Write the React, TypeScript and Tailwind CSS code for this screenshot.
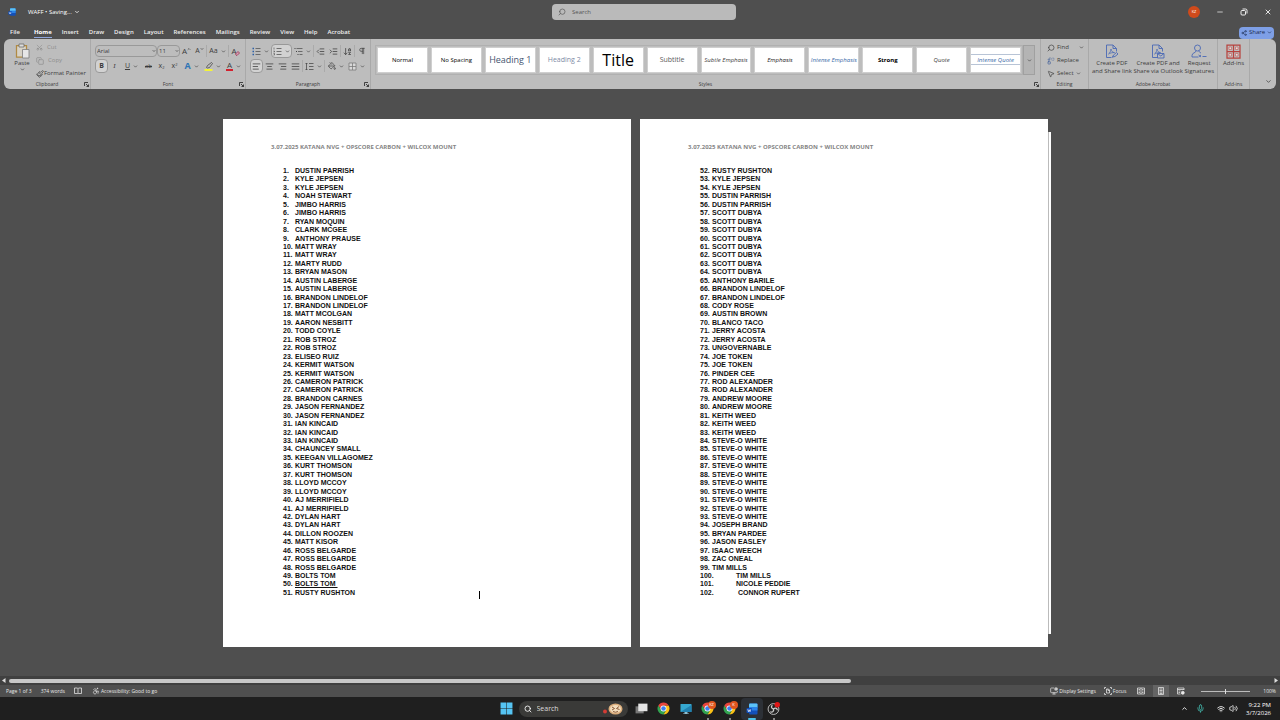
import type { ReactNode } from 'react';
import {
  Accessibility,
  AlignCenter,
  AlignJustify,
  AlignLeft,
  AlignRight,
  ArrowDownAZ,
  ChevronDown,
  ChevronUp,
  Copy,
  IndentDecrease,
  IndentIncrease,
  Mic,
  Minus,
  MonitorCog,
  MousePointer2,
  PaintBucket,
  Paintbrush,
  Pilcrow,
  Replace,
  Scissors,
  Search,
  Share2,
  Volume2,
  Wifi,
  X,
} from 'lucide-react';

const tabs = [
  'Home', 'Insert', 'Draw', 'Design', 'Layout', 'References',
  'Mailings', 'Review', 'View', 'Help', 'Acrobat',
];

const styleCards = [
  { name: 'Normal', look: 'text-[6px] text-black' },
  { name: 'No Spacing', look: 'text-[6px] text-black' },
  { name: 'Heading 1', look: 'text-[9px] text-[#44546f]' },
  { name: 'Heading 2', look: 'text-[7px] text-[#7d8aa5]' },
  { name: 'Title', look: 'text-[16px] text-black' },
  { name: 'Subtitle', look: 'text-[7px] text-[#5a5a5a]' },
  { name: 'Subtle Emphasis', look: 'text-[6px] italic text-[#404040]' },
  { name: 'Emphasis', look: 'text-[6px] italic text-[#222]' },
  { name: 'Intense Emphasis', look: 'text-[6px] italic text-[#3a6aa8]' },
  { name: 'Strong', look: 'text-[6px] font-bold text-black' },
  { name: 'Quote', look: 'text-[6px] italic text-[#404040]' },
  { name: 'Intense Quote', look: 'text-[6px] italic text-[#3a6aa8]' },
];

const firstPage = [
  'DUSTIN PARRISH', 'KYLE JEPSEN', 'KYLE JEPSEN', 'NOAH STEWART', 'JIMBO HARRIS',
  'JIMBO HARRIS', 'RYAN MOQUIN', 'CLARK MCGEE', 'ANTHONY PRAUSE', 'MATT WRAY',
  'MATT WRAY', 'MARTY RUDD', 'BRYAN MASON', 'AUSTIN LABERGE', 'AUSTIN LABERGE',
  'BRANDON LINDELOF', 'BRANDON LINDELOF', 'MATT MCOLGAN', 'AARON NESBITT', 'TODD COYLE',
  'ROB STROZ', 'ROB STROZ', 'ELISEO RUIZ', 'KERMIT WATSON', 'KERMIT WATSON',
  'CAMERON PATRICK', 'CAMERON PATRICK', 'BRANDON CARNES', 'JASON FERNANDEZ', 'JASON FERNANDEZ',
  'IAN KINCAID', 'IAN KINCAID', 'IAN KINCAID', 'CHAUNCEY SMALL', 'KEEGAN VILLAGOMEZ',
  'KURT THOMSON', 'KURT THOMSON', 'LLOYD MCCOY', 'LLOYD MCCOY', 'AJ MERRIFIELD',
  'AJ MERRIFIELD', 'DYLAN HART', 'DYLAN HART', 'DILLON ROOZEN', 'MATT KISOR',
  'ROSS BELGARDE', 'ROSS BELGARDE', 'ROSS BELGARDE', 'BOLTS TOM', 'BOLTS TOM ',
  'RUSTY RUSHTON',
];

const secondPage = [
  'RUSTY RUSHTON', 'KYLE JEPSEN', 'KYLE JEPSEN', 'DUSTIN PARRISH', 'DUSTIN PARRISH',
  'SCOTT DUBYA', 'SCOTT DUBYA', 'SCOTT DUBYA', 'SCOTT DUBYA', 'SCOTT DUBYA',
  'SCOTT DUBYA', 'SCOTT DUBYA', 'SCOTT DUBYA', 'ANTHONY BARILE', 'BRANDON LINDELOF',
  'BRANDON LINDELOF', 'CODY ROSE', 'AUSTIN BROWN', 'BLANCO TACO', 'JERRY ACOSTA',
  'JERRY ACOSTA', 'UNGOVERNABLE', 'JOE TOKEN', 'JOE TOKEN', 'PINDER CEE',
  'ROD ALEXANDER', 'ROD ALEXANDER', 'ANDREW MOORE', 'ANDREW MOORE', 'KEITH WEED',
  'KEITH WEED', 'KEITH WEED', 'STEVE-O WHITE', 'STEVE-O WHITE', 'STEVE-O WHITE',
  'STEVE-O WHITE', 'STEVE-O WHITE', 'STEVE-O WHITE', 'STEVE-O WHITE', 'STEVE-O WHITE',
  'STEVE-O WHITE', 'STEVE-O WHITE', 'JOSEPH BRAND', 'BRYAN PARDEE', 'JASON EASLEY',
  'ISAAC WEECH', 'ZAC ONEAL', 'TIM MILLS', 'TIM MILLS', 'NICOLE PEDDIE',
  ' CONNOR RUPERT',
];

function Tool({ label, active, wide, children }: { label: string; active?: boolean; wide?: boolean; children: ReactNode }) {
  return (
    <button
      aria-label={label}
      className={`flex h-[14px] shrink-0 items-center justify-center gap-[3px] rounded-sm ${wide ? 'w-[21px]' : 'w-[13px]'} ${
        active ? 'border border-[#999] bg-[#d2d2d2]' : ''
      }`}
    >
      {children}
    </button>
  );
}

function Caret() {
  return <ChevronDown className="size-[5px] shrink-0" strokeWidth={3} />;
}

function Divider() {
  return <span className="h-3 w-px shrink-0 bg-[#aaa]" />;
}

function Launcher() {
  return (
    <svg viewBox="0 0 10 10" className="size-[5px]" fill="none" stroke="#222" strokeWidth="1.6">
      <path d="M1 8V1h7M4 4l5 5M9 5v4H5" />
    </svg>
  );
}

function Group({ title, width, launcher, children }: { title: string; width: string; launcher?: boolean; children: ReactNode }) {
  return (
    <section aria-label={title} className={`flex flex-col border-r border-[#a9a9a9] ${width}`}>
      <div className="flex-1">{children}</div>
      <div className="grid h-[9px] grid-cols-[1fr_auto_1fr] items-center text-[5px] leading-[9px] text-[#3c3c3c]">
        <span />
        <span>{title}</span>
        {launcher && (
          <button aria-label={`${title} settings`} className="mr-px justify-self-end">
            <Launcher />
          </button>
        )}
      </div>
    </section>
  );
}

function Bullets({ numbered, nested }: { numbered?: boolean; nested?: boolean }) {
  return (
    <svg viewBox="0 0 18 18" className="size-[9px]" fill="none" stroke="#555" strokeWidth="1.6">
      <path d={nested ? 'M5 3h12M8 9h9M11 15h6' : 'M7 3h10M7 9h10M7 15h10'} />
      {nested ? (
        <path d="M1 3h2M4 9h2M7 15h2" stroke="#444" strokeWidth="2" />
      ) : numbered ? (
        <path d="M2 1v4M1 8h2v2H1M1 13h2v3H1" stroke="#444" strokeWidth="1.2" />
      ) : (
        <path d="M1 3h3M1 9h3M1 15h3" stroke="#2b5fa8" strokeWidth="3" />
      )}
    </svg>
  );
}

function WordLogo({ className }: { className: string }) {
  return (
    <svg viewBox="0 0 24 24" className={className}>
      <rect x="6" y="1" width="17" height="22" rx="2" fill="#1450b8" />
      <path d="M6 3a2 2 0 0 1 2-2h13a2 2 0 0 1 2 2v6H6z" fill="#5cc3f7" />
      <path d="M6 8h17v7H6z" fill="#2a83e8" />
      <rect x="1" y="10" width="11" height="10" rx="2" fill="#0f4fbc" />
      <path d="M3.500 12.500l1.500 5 1.500-4 1.500 4 1.500-5" fill="none" stroke="#fff" strokeWidth="1.300" />
    </svg>
  );
}

function ChromeLogo() {
  return (
    <svg viewBox="0 0 24 24" className="size-[13px]">
      <path d="M12 6.500h9.530A11 11 0 0 1 12 23l4.770-8.250z" fill="#fbc116" />
      <path d="M12 6.500h9.530A11 11 0 0 0 2.470 6.500l4.770 8.250z" fill="#e8453c" />
      <path d="M2.470 6.500l4.770 8.250L16.770 14.750 12 23A11 11 0 0 1 2.470 6.500z" fill="#32a350" />
      <circle cx="12" cy="12" r="5.500" fill="#fff" />
      <circle cx="12" cy="12" r="4.200" fill="#3d7ff0" />
    </svg>
  );
}

function PdfIcon({ mail }: { mail?: boolean }) {
  return (
    <svg viewBox="0 0 28 30" className="h-[15px] w-[14px]" fill="none" stroke="#4a69b5" strokeWidth="1.800">
      <path d="M12 27H3V2h13l7 7v6M16 2v7h7" />
      <path d="M7 20c3-2 5-7 5-10 0 4 3 7 7 7-4 0-9 1-12 3z" strokeWidth="1.500" />
      {mail ? (
        <path d="M13 19h13v9H13zM13 19l6.500 5 6.500-5" />
      ) : (
        <path d="M15 26l2-4 6-5 3 3-6 5zM13 28l3-3" />
      )}
    </svg>
  );
}

function SignatureIcon() {
  return (
    <svg viewBox="0 0 32 30" className="h-[15px] w-4" fill="none" stroke="#4a69b5" strokeWidth="1.800">
      <circle cx="13" cy="8" r="6" />
      <path d="M10 14c0 4-8 3-8 9v3h12M16 14c0 2 2 3 4 4M15 22l5 4M20 22l-5 4M23 25h8" />
    </svg>
  );
}

function Ribbon() {
  return (
    <div className="mx-1 flex h-[50px] rounded-md bg-[#bdbdbd] text-[#3c3c3c]">
      <Group title="Clipboard" width="w-[87px]" launcher>
        <div className="flex gap-1 pl-2 pt-[2px]">
          <button className="flex w-5 flex-col items-center pt-[2px] text-[6px] leading-[8px]">
            <svg viewBox="0 0 30 32" className="h-4 w-[15px]">
              <path d="M3 5h20v23H3z" fill="#d7d2c6" stroke="#b08a43" strokeWidth="2.500" />
              <path d="M8 2h10v6H8z" fill="#ddd" stroke="#666" strokeWidth="1.500" />
              <path d="M15 13h13v17H15z" fill="#e6e6e6" stroke="#777" strokeWidth="1.500" />
            </svg>
            Paste
            <Caret />
          </button>
          <div className="flex flex-col text-[6px] leading-[13px]">
            <button className="flex h-[13px] items-center gap-1 text-[#8d8d8d]">
              <Scissors className="size-[7px] -rotate-90" />
              Cut
            </button>
            <button className="flex h-[13px] items-center gap-1 text-[#8d8d8d]">
              <Copy className="size-2" />
              Copy
            </button>
            <button className="flex h-[13px] items-center whitespace-nowrap">
              <Paintbrush className="size-2" />
              Format Painter
            </button>
          </div>
        </div>
      </Group>

      <Group title="Font" width="w-[155px]" launcher>
        <div className="mt-[5px] flex h-[14px] items-center pl-1">
          <label className="relative flex">
            <select aria-label="Font name" className="h-3 w-[62px] appearance-none rounded-sm border border-[#999] bg-transparent pl-px text-[6px] leading-[10px]">
              <option>Arial</option>
            </select>
            <ChevronDown className="pointer-events-none absolute right-px top-[4px] size-[4px]" strokeWidth={4} />
          </label>
          <label className="relative flex">
            <select aria-label="Font size" className="h-3 w-[23px] appearance-none rounded-sm border border-[#999] bg-transparent pl-px text-[6px] leading-[10px]">
              <option>11</option>
            </select>
            <ChevronDown className="pointer-events-none absolute right-px top-[4px] size-[4px]" strokeWidth={4} />
          </label>
          <Tool label="Increase font size"><span className="text-[8px]">A</span><ChevronUp className="-ml-[3px] mb-1 size-[4px]" strokeWidth={4} /></Tool>
          <Tool label="Decrease font size"><span className="text-[7px]">A</span><ChevronDown className="-ml-[3px] mb-1 size-[4px]" strokeWidth={4} /></Tool>
          <Divider />
          <Tool label="Change case" wide><span className="text-[7px]">Aa</span><Caret /></Tool>
          <Divider />
          <Tool label="Clear formatting">
            <span className="text-[8px]">A</span>
            <svg viewBox="0 0 10 10" className="-ml-[5px] mt-1 size-[5px]" fill="#d9a0b4" stroke="#96284f" strokeWidth="1.500">
              <path d="M1 6l5-5 3 3-5 5H3z" />
            </svg>
          </Tool>
        </div>
        <div className="mt-px flex h-[14px] items-center pl-1 text-[7px]">
          <Tool label="Bold" active><b>B</b></Tool>
          <Tool label="Italic"><i className="font-serif">I</i></Tool>
          <Tool label="Underline" wide><u>U</u><Caret /></Tool>
          <Tool label="Strikethrough"><s className="text-[6px]">ab</s></Tool>
          <Tool label="Subscript"><span>x<sub className="text-[4px]">2</sub></span></Tool>
          <Tool label="Superscript"><span>x<sup className="text-[4px]">2</sup></span></Tool>
          <Tool label="Text effects" wide><span className="text-[9px] font-bold text-[#2f74b5]">A</span><Caret /></Tool>
          <Tool label="Highlight color" wide>
            <svg viewBox="0 0 18 18" className="size-[9px]" fill="none" stroke="#444" strokeWidth="1.500">
              <path d="M5 11l2-4 8-6 2 2-6 8-4 1z" />
              <path d="M1 16h16" stroke="#f4f436" strokeWidth="4" />
            </svg>
            <Caret />
          </Tool>
          <Tool label="Font color" wide><span className="h-[10px] border-b-2 border-[#d4202e] px-px text-[8px] leading-[8px]">A</span><Caret /></Tool>
        </div>
      </Group>

      <Group title="Paragraph" width="w-[125px]" launcher>
        <div className="mt-[5px] flex h-[14px] items-center pl-1">
          <Tool label="Bullets" wide><Bullets /><Caret /></Tool>
          <Tool label="Numbering" wide active><Bullets numbered /><Caret /></Tool>
          <Tool label="Multilevel list" wide><Bullets nested /><Caret /></Tool>
          <Divider />
          <Tool label="Decrease indent"><IndentDecrease className="size-[9px]" /></Tool>
          <Tool label="Increase indent"><IndentIncrease className="size-[9px]" /></Tool>
          <Divider />
          <Tool label="Sort"><ArrowDownAZ className="size-[9px]" /></Tool>
          <Divider />
          <Tool label="Show marks"><Pilcrow className="size-2" /></Tool>
        </div>
        <div className="mt-px flex h-[14px] items-center pl-1">
          <Tool label="Align left" active><AlignLeft className="size-[9px]" /></Tool>
          <Tool label="Center"><AlignCenter className="size-[9px]" /></Tool>
          <Tool label="Align right"><AlignRight className="size-[9px]" /></Tool>
          <Tool label="Justify"><AlignJustify className="size-[9px]" /></Tool>
          <Divider />
          <Tool label="Line spacing" wide>
            <svg viewBox="0 0 18 18" className="size-[9px]" fill="none" stroke="#444" strokeWidth="1.500">
              <path d="M3 2v14M1 4l2-2 2 2M1 14l2 2 2-2M8 3h9M8 9h9M8 15h9" />
            </svg>
            <Caret />
          </Tool>
          <Divider />
          <Tool label="Shading" wide><PaintBucket className="size-2" /><Caret /></Tool>
          <Tool label="Borders" wide>
            <svg viewBox="0 0 18 18" className="size-[9px]" fill="#d8d8d8" stroke="#777" strokeWidth="1.500">
              <path d="M2 2h14v14H2zM9 2v14M2 9h14" />
            </svg>
            <Caret />
          </Tool>
        </div>
      </Group>

      <Group title="Styles" width="min-w-0 flex-1" launcher>
        <div className="flex items-stretch pl-1 pr-[5px] pt-[6px]">
          <div className="flex min-w-0 flex-1 gap-[3px] border border-[#b0b0b0] p-px">
            {styleCards.map((card) => (
              <button
                key={card.name}
                className="relative flex h-[26px] min-w-0 flex-1 items-center justify-center overflow-hidden whitespace-nowrap border border-[#cfcfcf] bg-white"
              >
                {card.name === 'Intense Quote' && <span className="absolute inset-x-0 top-[6px] h-[11px] border-y border-[#b8c4d6]" />}
                <span className={card.look}>{card.name}</span>
              </button>
            ))}
          </div>
          <button aria-label="More styles" className="flex w-3 items-center justify-center border border-[#a0a0a0] bg-[#b4b4b4]">
            <Caret />
          </button>
        </div>
      </Group>

      <Group title="Editing" width="w-[48px]">
        <div className="flex flex-col pl-[6px] pt-[2px] text-[6px]">
          <button className="flex h-[13px] items-center gap-[2px]"><Search className="size-2 -scale-x-100" />Find<span className="pl-2"><Caret /></span></button>
          <button className="flex h-[13px] items-center gap-[2px]"><Replace className="size-2 text-[#44609a]" />Replace</button>
          <button className="flex h-[13px] items-center gap-[2px]"><MousePointer2 className="size-2" />Select<Caret /></button>
        </div>
      </Group>

      <Group title="Adobe Acrobat" width="w-[129px]">
        <div className="flex justify-between px-[3px] pt-[5px] text-[6px] leading-[8px]">
          <button className="flex flex-col items-center whitespace-nowrap"><PdfIcon /><span>Create PDF<br />and Share link</span></button>
          <button className="flex flex-col items-center whitespace-nowrap"><PdfIcon mail /><span>Create PDF and<br />Share via Outlook</span></button>
          <button className="flex flex-col items-center whitespace-nowrap"><SignatureIcon /><span>Request<br />Signatures</span></button>
        </div>
      </Group>

      <Group title="Add-ins" width="w-[32px]">
        <button className="flex w-full flex-col items-center pt-[5px] text-[6px] leading-[8px]">
          <svg viewBox="0 0 30 30" className="size-[15px]" fill="none" stroke="#b8433f" strokeWidth="2.500">
            <path d="M2 2h26v26H2zM15 2v26M2 15h26" />
            <path d="M6 6h5v5H6zM19 6h5v5h-5zM6 19h5v5H6zM19 19h5v5h-5z" fill="#f0dada" strokeWidth="1" />
          </svg>
          Add-ins
        </button>
      </Group>

      <button aria-label="Collapse ribbon" className="flex w-[26px] items-end justify-end p-1">
        <ChevronDown className="size-[7px]" strokeWidth={2.5} />
      </button>
    </div>
  );
}

function Page({ names, start, caret }: { names: string[]; start: number; caret?: boolean }) {
  return (
    <article className="relative w-[408px] bg-white pb-[50px] pt-6">
      <header className="pl-12 text-[6px] font-bold leading-[9px] text-[#858585]">
        3.07.2025 KATANA NVG + OPSCORE CARBON + WILCOX MOUNT
      </header>
      <ol className="mt-[15px] flex h-[430px] flex-col justify-between pl-[60px] font-['Liberation_Sans',Arial,sans-serif] text-[7px] font-bold leading-[8px] text-[#111]">
        {names.map((name, i) => {
          const n = start + i;
          return (
            <li key={n} className="flex whitespace-pre">
              <span className={n > 99 ? 'w-9' : 'w-3'}>{n}.</span>
              <span className={n === 50 ? 'underline' : ''}>{name}</span>
            </li>
          );
        })}
      </ol>
      {caret && <span className="absolute left-64 top-[472px] h-2 w-px bg-black" />}
    </article>
  );
}

function Taskbar() {
  return (
    <footer className="grid h-[23px] grid-cols-[1fr_auto_1fr] items-center bg-[#1f1f1f] text-white">
      <span />
      <nav className="flex items-center pl-1">
        <button aria-label="Start" className="mr-[6px]">
          <svg viewBox="0 0 24 24" className="size-[13px]" fill="#55c3f2">
            <path d="M1 1h10.500v10.500H1zM12.500 1H23v10.500H12.500zM1 12.500h10.500V23H1zM12.500 12.500H23V23H12.500z" />
          </svg>
        </button>
        <label className="mr-[3px] flex h-4 w-[109px] items-center gap-1 rounded-full bg-[#3a3a38] px-[5px]">
          <Search className="size-2 shrink-0" strokeWidth={2.5} />
          <input aria-label="Search Windows" placeholder="Search" className="min-w-0 flex-1 bg-transparent pl-px text-[7px] leading-3 outline-none placeholder:text-[#ddd]" />
          <svg viewBox="0 0 40 24" className="h-3 w-5 shrink-0">
            <circle cx="4" cy="17" r="4" fill="#d23c35" />
            <ellipse cx="25" cy="12" rx="14" ry="11" fill="#dcae7c" />
            <ellipse cx="25" cy="12" rx="11" ry="8" fill="#f2dcbc" />
            <path d="M18 8l5 3-5 3M32 7l-5 4 6 2M20 17q5 3 10 0" fill="none" stroke="#8a5a38" strokeWidth="2" />
          </svg>
        </label>
        <button aria-label="Task view" className="flex h-[22px] w-[22px] items-center justify-center">
          <svg viewBox="0 0 24 24" className="size-[13px]">
            <rect x="1" y="8" width="15" height="13" fill="#777" />
            <rect x="6" y="3" width="17" height="14" fill="#e4e4e4" />
          </svg>
        </button>
        <button aria-label="Chrome" className="flex h-[22px] w-[22px] items-center justify-center"><ChromeLogo /></button>
        <button aria-label="Desktop" className="flex h-[22px] w-[22px] items-center justify-center">
          <svg viewBox="0 0 24 24" className="size-3">
            <rect x="1" y="2" width="22" height="16" rx="1" fill="#35a7cf" />
            <path d="M1 18L23 4v13a1 1 0 0 1-1 1z" fill="#2181b0" />
            <path d="M9 18h6v3h3v1H6v-1h3z" fill="#8cbfd2" />
          </svg>
        </button>
        {['KZ', 'K'].map((who) => (
          <button key={who} aria-label={`Chrome profile ${who}`} className="relative flex h-[22px] w-[22px] items-center justify-center">
            <ChromeLogo />
            <span className="absolute right-[3px] top-[3px] flex size-2 items-center justify-center rounded-full bg-[#e0551f] text-[4px] leading-none">{who}</span>
            <span className="absolute bottom-0 size-[2px] rounded-full bg-[#aaa]" />
          </button>
        ))}
        <button aria-label="Word" className="relative flex h-[22px] w-[22px] items-center justify-center rounded-sm bg-[#2c3036]">
          <WordLogo className="size-3" />
          <span className="absolute bottom-0 h-[2px] w-2 rounded-full bg-[#4cc2e8]" />
        </button>
        <button aria-label="OBS" className="relative flex h-[22px] w-[22px] items-center justify-center">
          <svg viewBox="0 0 24 24" className="size-[13px]" fill="none" stroke="#cfcfcf" strokeWidth="1.600">
            <circle cx="12" cy="13" r="10" fill="#222" />
            <path d="M12 13c-4-1-5-5-2-7M12 13c3-3 7-2 7 2M12 13c1 4-2 7-6 5" strokeWidth="2.400" />
            <circle cx="19" cy="5" r="5" fill="#e01818" stroke="none" />
          </svg>
          <span className="absolute bottom-0 size-[2px] rounded-full bg-[#aaa]" />
        </button>
      </nav>
      <div className="flex items-center justify-end pr-[9px]">
        <ChevronUp className="mr-2 size-[7px]" strokeWidth={3} />
        <Mic className="mr-3 size-[9px] text-[#45c0b4]" />
        <Wifi className="mr-1 size-2" strokeWidth={2.5} />
        <Volume2 className="mr-2 size-[9px]" />
        <div className="text-right text-[6px] leading-[8px]">
          <p>9:22 PM</p>
          <p>3/7/2026</p>
        </div>
      </div>
    </footer>
  );
}

export default function App() {
  return (
    <div className="flex min-h-screen flex-col bg-[#4f4f4f] font-['Open_Sans','Noto_Sans',sans-serif]">
      <header className="grid h-6 grid-cols-[1fr_184px_1fr] items-center pl-2 text-white">
        <div className="flex items-center text-[6px]">
          <WordLogo className="mr-3 size-2" />
          <h1>WAFF • Saving...</h1>
          <ChevronDown className="ml-[2px] size-[6px]" strokeWidth={3} />
        </div>
        <label className="flex h-4 items-center gap-[6px] rounded-sm bg-[#bababa] px-[6px] text-[#555]">
          <Search className="size-2 -scale-x-100" />
          <input aria-label="Search" placeholder="Search" className="min-w-0 flex-1 bg-transparent text-[6px] leading-3 outline-none placeholder:text-[#555]" />
        </label>
        <div className="flex items-center justify-end gap-4 pr-2">
          <button aria-label="Account" className="flex size-3 items-center justify-center rounded-full bg-[#cf4a1b] text-[4px] leading-none">KZ</button>
          <button aria-label="Minimize"><Minus className="size-2" /></button>
          <button aria-label="Restore">
            <svg viewBox="0 0 16 16" className="size-2" fill="none" stroke="#fff" strokeWidth="1.800">
              <rect x="2" y="5" width="9" height="9" rx="2" />
              <path d="M5 2h6a3 3 0 0 1 3 3v6" />
            </svg>
          </button>
          <button aria-label="Close"><X className="size-2" strokeWidth={2.5} /></button>
        </div>
      </header>

      <nav className="flex h-[15px] items-center gap-[14px] pl-[10px] pr-[6px] pt-[2px] text-[6px] font-semibold leading-[9px] text-[#eee]">
        <button className="border-b border-transparent">File</button>
        <div className="flex gap-[10px]">
          {tabs.map((tab) => (
            <button key={tab} className={tab === 'Home' ? 'border-b border-[#8fa6dc] font-bold text-white' : 'border-b border-transparent'}>
              {tab}
            </button>
          ))}
        </div>
        <button className="ml-auto flex h-3 w-[35px] items-center justify-center gap-[2px] rounded-sm bg-[#7e9fe6] font-normal text-[#1c2c50]">
          <Share2 className="size-[6px]" />
          Share
          <Caret />
        </button>
      </nav>

      <Ribbon />

      <main className="flex flex-1 items-start justify-center pb-[29px] pr-[6px] pt-[30px]">
        <div className="flex">
          <Page names={firstPage} start={1} caret />
          <div className="w-[9px]" />
          <Page names={secondPage} start={52} />
          <div className="my-[13px] w-[3px] border-l border-[#bbb] bg-white" />
        </div>
      </main>

      <div className="flex h-[9px] items-center justify-between bg-[#404040] px-[2px]">
        <svg viewBox="0 0 8 10" className="h-[5px] w-1" fill="#ddd"><path d="M7 0v10L0 5z" /></svg>
        <div className="ml-[3px] mr-auto h-1 w-[66%] rounded-full bg-[#c8c8c8]" />
        <svg viewBox="0 0 8 10" className="h-[5px] w-1" fill="#ddd"><path d="M1 0v10l7-5z" /></svg>
      </div>

      <div className="flex h-3 items-center pl-[6px] pr-1 text-[5px] leading-[8px] text-[#e8e8e8]">
        <span>Page 1 of 3</span>
        <span className="ml-[9px]">374 words</span>
        <svg viewBox="0 0 16 16" className="ml-[9px] size-2" fill="none" stroke="currentColor" strokeWidth="1.500">
          <path d="M1 2h6l1 1 1-1h6v11H9l-1 1-1-1H1zM8 3v10" />
        </svg>
        <button className="ml-[10px] flex items-center gap-px"><Accessibility className="size-2" />Accessibility: Good to go</button>
        <button className="ml-auto flex items-center gap-px"><MonitorCog className="size-2" />Display Settings</button>
        <button className="ml-2 flex items-center gap-px">
          <svg viewBox="0 0 16 16" className="size-2" fill="none" stroke="currentColor" strokeWidth="1.500">
            <path d="M1 4V1h3M12 1h3v3M15 12v3h-3M4 15H1v-3M5 4h4l2 2v6H5zM8 4v3h3" />
          </svg>
          Focus
        </button>
        <button aria-label="Read mode" className="ml-[11px]">
          <svg viewBox="0 0 16 16" className="size-2" fill="none" stroke="currentColor" strokeWidth="1.500">
            <path d="M1 2h14v12H1zM8 2v12M3 5h3M3 8h3M3 11h3M10 5h3M10 8h3M10 11h3" />
          </svg>
        </button>
        <button aria-label="Print layout" className="ml-2 flex h-3 w-4 items-center justify-center bg-[#646464]">
          <svg viewBox="0 0 16 16" className="size-2" fill="none" stroke="currentColor" strokeWidth="1.500">
            <path d="M3 1h10v14H3zM5 4h6M5 7h6M5 10h6M5 13h6" />
          </svg>
        </button>
        <button aria-label="Web layout" className="ml-2">
          <svg viewBox="0 0 16 16" className="size-2" fill="none" stroke="currentColor" strokeWidth="1.500">
            <path d="M7 14H1V2h13v4M1 5h13M3 8h4M3 11h3" />
            <circle cx="11.500" cy="11.500" r="3" fill="currentColor" />
          </svg>
        </button>
        <input
          type="range"
          aria-label="Zoom"
          defaultValue={50}
          className="ml-4 h-px w-[49px] appearance-none bg-[#bbb] [&::-webkit-slider-thumb]:h-[5px] [&::-webkit-slider-thumb]:w-px [&::-webkit-slider-thumb]:appearance-none [&::-webkit-slider-thumb]:bg-[#ddd]"
        />
        <span className="ml-[13px]">100%</span>
      </div>

      <Taskbar />
    </div>
  );
}
